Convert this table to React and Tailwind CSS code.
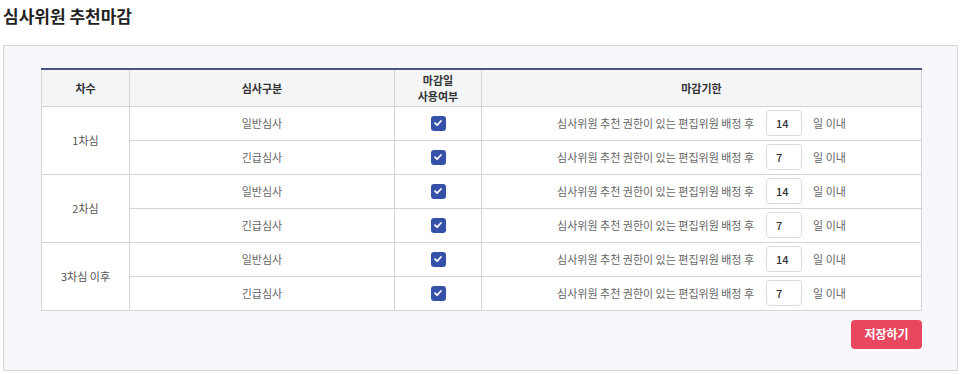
const rows = [
  { round: "1차심", items: [{ type: "일반심사", days: "14" }, { type: "긴급심사", days: "7" }] },
  { round: "2차심", items: [{ type: "일반심사", days: "14" }, { type: "긴급심사", days: "7" }] },
  { round: "3차심 이후", items: [{ type: "일반심사", days: "14" }, { type: "긴급심사", days: "7" }] },
];

function CheckBox() {
  return (
    <span className="inline-flex h-[15px] w-[15px] items-center justify-center rounded-[3px] bg-[#3552a8]">
      <svg width="10" height="10" viewBox="0 0 10 10" fill="none">
        <path d="M2 5.2 L4.1 7.2 L8 3" stroke="white" strokeWidth="1.8" strokeLinecap="round" strokeLinejoin="round" />
      </svg>
    </span>
  );
}

export default function App() {
  return (
    <div
      className="w-[961px] h-[374px] bg-white pt-[4px]"
      style={{ fontFamily: '"Noto Sans CJK KR", "Noto Sans", sans-serif' }}
    >
      <h1 className="pl-[3px] text-[17px] font-bold leading-[24px] text-[#222]">심사위원 추천마감</h1>

      {/* Panel */}
      <div className="ml-[3px] mt-[17px] w-[955px] h-[326px] border border-[#d6d6d6] bg-[#f7f8fb] pl-[37px] pr-[35px] pt-[22px]">
        <table className="w-[881px] table-fixed border-collapse bg-white text-[11px]">
          <colgroup>
            <col className="w-[88px]" />
            <col className="w-[265px]" />
            <col className="w-[87px]" />
            <col />
          </colgroup>
          <thead>
            <tr className="h-[37px] border-t-2 border-t-[#4a5683] bg-[#f4f5f7] font-bold text-[#333]">
              <th className="border border-[#d4d4d4] border-t-[#4a5683] font-bold">차수</th>
              <th className="border border-[#d4d4d4] border-t-[#4a5683] font-bold">심사구분</th>
              <th className="border border-[#d4d4d4] border-t-[#4a5683] p-0 font-bold leading-[16px]">
                <div>마감일</div>
                <div>사용여부</div>
              </th>
              <th className="border border-[#d4d4d4] border-t-[#4a5683] font-bold">마감기한</th>
            </tr>
          </thead>
          <tbody className="text-[#666]">
            {rows.map((r) =>
              r.items.map((it, i) => (
                <tr key={r.round + it.type} className="h-[34px]">
                  {i === 0 && (
                    <td rowSpan={2} className="border border-[#d4d4d4] text-center text-[#555]">
                      {r.round}
                    </td>
                  )}
                  <td className="border border-[#d4d4d4] text-center">{it.type}</td>
                  <td className="border border-[#d4d4d4] text-center">
                    <div className="flex items-center justify-center">
                      <CheckBox />
                    </div>
                  </td>
                  <td className="border border-[#d4d4d4]">
                    <div className="flex items-center justify-center">
                      <span>심사위원 추천 권한이 있는 편집위원 배정 후</span>
                      <span className="ml-[12px] flex h-[26px] w-[36px] items-center rounded-[4px] border border-[#dcdcdc] bg-white pl-[9px] text-[11px] font-medium text-[#333]">
                        {it.days}
                      </span>
                      <span className="ml-[11px]">일 이내</span>
                    </div>
                  </td>
                </tr>
              ))
            )}
          </tbody>
        </table>

        <div className="mt-[9px] flex w-[881px] justify-end">
          <button className="h-[29px] w-[71px] rounded-[4px] bg-[#e8475f] text-[12px] font-bold text-white">
            저장하기
          </button>
        </div>
      </div>
    </div>
  );
}
